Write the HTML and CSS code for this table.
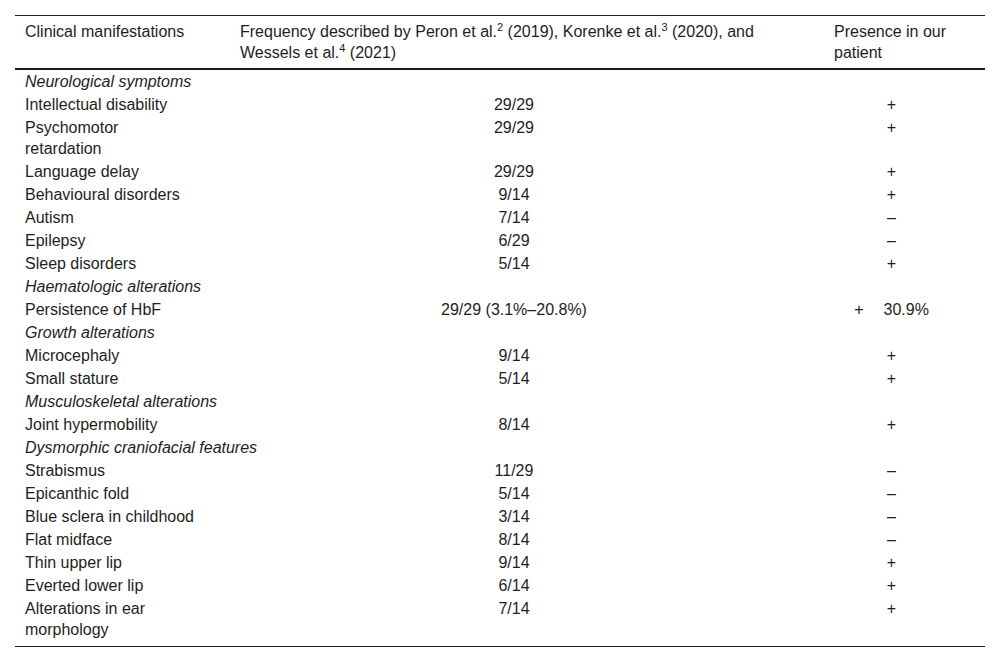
FILE: index.html
```html
<!DOCTYPE html>
<html lang="en">
<head>
<meta charset="utf-8">
<title>Clinical manifestations</title>
<link rel="stylesheet" href="styles.css">
</head>
<body>
<div class="wrap">
<table class="data">
  <colgroup>
    <col class="c1"><col class="c2"><col class="c3">
  </colgroup>
  <thead>
    <tr>
      <th>Clinical manifestations</th>
      <th>Frequency described by Peron et al.<sup>2</sup> (2019), Korenke et al.<sup>3</sup> (2020), and Wessels et al.<sup>4</sup> (2021)</th>
      <th>Presence in our patient</th>
    </tr>
  </thead>
  <tbody>
    <tr class="cat"><td colspan="3">Neurological symptoms</td></tr>
    <tr><td>Intellectual disability</td><td class="mid">29/29</td><td class="mid">+</td></tr>
    <tr><td>Psychomotor retardation</td><td class="mid">29/29</td><td class="mid">+</td></tr>
    <tr><td>Language delay</td><td class="mid">29/29</td><td class="mid">+</td></tr>
    <tr><td>Behavioural disorders</td><td class="mid">9/14</td><td class="mid">+</td></tr>
    <tr><td>Autism</td><td class="mid">7/14</td><td class="mid">–</td></tr>
    <tr><td>Epilepsy</td><td class="mid">6/29</td><td class="mid">–</td></tr>
    <tr><td>Sleep disorders</td><td class="mid">5/14</td><td class="mid">+</td></tr>
    <tr class="cat"><td colspan="3">Haematologic alterations</td></tr>
    <tr><td>Persistence of HbF</td><td class="mid">29/29 (3.1%–20.8%)</td><td class="mid">+<span class="val">30.9%</span></td></tr>
    <tr class="cat"><td colspan="3">Growth alterations</td></tr>
    <tr><td>Microcephaly</td><td class="mid">9/14</td><td class="mid">+</td></tr>
    <tr><td>Small stature</td><td class="mid">5/14</td><td class="mid">+</td></tr>
    <tr class="cat"><td colspan="3">Musculoskeletal alterations</td></tr>
    <tr><td>Joint hypermobility</td><td class="mid">8/14</td><td class="mid">+</td></tr>
    <tr class="cat"><td colspan="3">Dysmorphic craniofacial features</td></tr>
    <tr><td>Strabismus</td><td class="mid">11/29</td><td class="mid">–</td></tr>
    <tr><td>Epicanthic fold</td><td class="mid">5/14</td><td class="mid">–</td></tr>
    <tr><td>Blue sclera in childhood</td><td class="mid">3/14</td><td class="mid">–</td></tr>
    <tr><td>Flat midface</td><td class="mid">8/14</td><td class="mid">–</td></tr>
    <tr><td>Thin upper lip</td><td class="mid">9/14</td><td class="mid">+</td></tr>
    <tr><td>Everted lower lip</td><td class="mid">6/14</td><td class="mid">+</td></tr>
    <tr class="last"><td>Alterations in ear morphology</td><td class="mid">7/14</td><td class="mid">+</td></tr>
  </tbody>
</table>
</div>
</body>
</html>
```

FILE: styles.css
```css
html, body {
  margin: 0;
  padding: 0;
  background: #ffffff;
}

.wrap {
  padding: 15px;
}

.data {
  width: 970px;
  table-layout: fixed;
  border-collapse: collapse;
  font-family: "Liberation Sans", Arial, sans-serif;
  font-size: 16px;
  line-height: 21px;
  color: #1e1e1e;
  border-top: 1px solid #1e1e1e;
  border-bottom: 1px solid #1e1e1e;
}

.c1 { width: 215px; }
.c2 { width: 594px; }
.c3 { width: 161px; }

.data th {
  font-weight: normal;
  text-align: left;
  vertical-align: top;
  padding: 5px 36px 5px 10px;
  border-bottom: 2px solid #1e1e1e;
}

.data td {
  vertical-align: top;
  padding: 1px 36px 1px 10px;
}

.data td.mid {
  text-align: center;
}

.data .cat td {
  font-style: italic;
}

.data .last td {
  padding-bottom: 6px;
}

.data sup {
  font-size: 11px;
  line-height: 0;
  vertical-align: 6px;
}

.val {
  margin-left: 20px;
}
```
